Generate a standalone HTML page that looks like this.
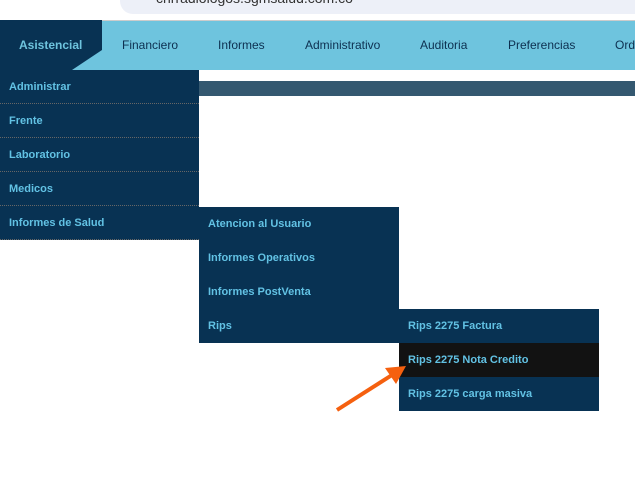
<!DOCTYPE html>
<html><head><meta charset="utf-8"><style>
*{margin:0;padding:0;box-sizing:border-box}
body{width:635px;height:486px;background:#fff;position:relative;overflow:hidden;font-family:"Liberation Sans",Arial,sans-serif}
.top{position:absolute;left:0;top:0;width:635px;height:20px;background:#fff}
.url{position:absolute;left:120px;top:-12px;width:530px;height:26px;border-radius:13px;background:#edf0f8;overflow:hidden}
.url span{position:absolute;left:36px;top:2px;font-size:14px;color:#333}
.nav{position:absolute;left:0;top:20px;width:635px;height:50px;background:#6ec4de;border-top:1px solid #ccc}
.nav span{position:absolute;top:17px;font-size:12px;color:#0d3050}
.tab{position:absolute;left:0;top:20px;width:102px;height:50px;background:#083253;clip-path:polygon(0 0,100% 0,100% 60%,72px 100%,0 100%)}
.tab span{position:absolute;left:19px;top:18px;font-size:12px;font-weight:bold;color:#6ec4de}
.strip{position:absolute;left:199px;top:81px;width:436px;height:15px;background:#345870}
.m{position:absolute;width:200px;height:34px;background:#083253;color:#62c2e4;font-size:11px;font-weight:bold;padding:11px 0 0 9px}
.c1{border-bottom:1px dotted #666}
.m.sel{background:#121212}
</style></head><body>
<div class="top"><div class="url"><span>cnrradiologos.sgmsalud.com.co</span></div></div>
<div class="nav">
<span style="left:122px">Financiero</span>
<span style="left:218px">Informes</span>
<span style="left:305px">Administrativo</span>
<span style="left:420px">Auditoria</span>
<span style="left:508px">Preferencias</span>
<span style="left:615px">Ord</span>
</div>
<div class="tab"><span>Asistencial</span></div>
<div class="strip"></div>
<div class="m c1" style="left:0;top:70px;width:199px">Administrar</div>
<div class="m c1" style="left:0;top:104px;width:199px">Frente</div>
<div class="m c1" style="left:0;top:138px;width:199px">Laboratorio</div>
<div class="m c1" style="left:0;top:172px;width:199px">Medicos</div>
<div class="m c1" style="left:0;top:206px;width:199px">Informes de Salud</div>
<div class="m" style="left:199px;top:207px">Atencion al Usuario</div>
<div class="m" style="left:199px;top:241px">Informes Operativos</div>
<div class="m" style="left:199px;top:275px">Informes PostVenta</div>
<div class="m" style="left:199px;top:309px">Rips</div>
<div class="m" style="left:399px;top:309px">Rips 2275 Factura</div>
<div class="m sel" style="left:399px;top:343px">Rips 2275 Nota Credito</div>
<div class="m" style="left:399px;top:377px">Rips 2275 carga masiva</div>
<svg style="position:absolute;left:0;top:0" width="635" height="486">
<line x1="337" y1="410" x2="392" y2="375" stroke="#f5600f" stroke-width="4"/>
<polygon points="406,366 385,368 396,384" fill="#f5600f"/>
</svg>
</body></html>
